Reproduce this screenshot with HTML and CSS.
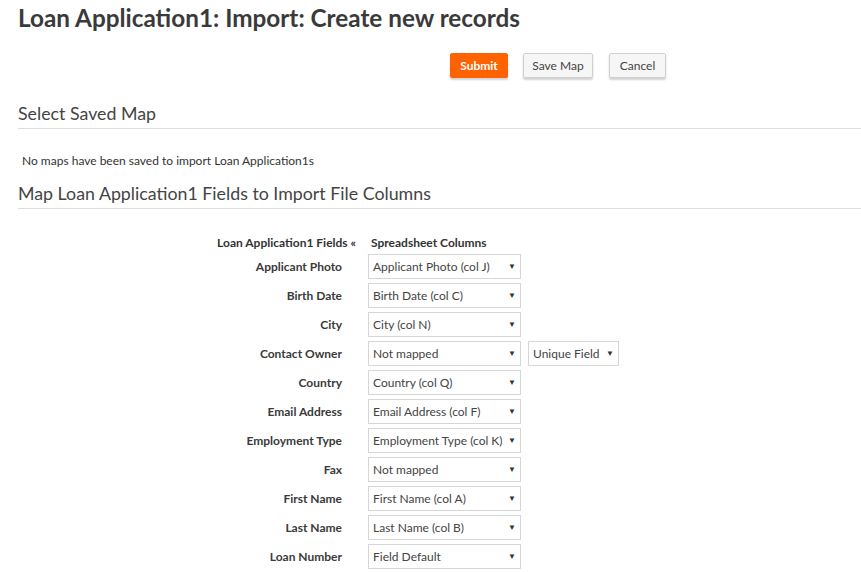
FILE: index.html
```html
<!DOCTYPE html>
<html>
<head>
<meta charset="utf-8">
<link rel="stylesheet" href="styles.css">
</head>
<body>
<h1 class="title">Loan Application1: Import: Create new records</h1>
<div class="actions">
  <button class="btn btn-primary btn-submit">Submit</button>
  <button class="btn btn-save">Save Map</button>
  <button class="btn btn-cancel">Cancel</button>
</div>
<h2 class="section">Select Saved Map</h2>
<p class="note">No maps have been saved to import Loan Application1s</p>
<h2 class="section section-map">Map Loan Application1 Fields to Import File Columns</h2>
<div class="map">
  <div class="map-head-label">Loan Application1 Fields «</div>
  <div class="map-head-col">Spreadsheet Columns</div>

  <div class="lbl">Applicant Photo</div>
  <div class="ctrls"><div class="sel">Applicant Photo (col J)<span class="arr">▼</span></div></div>

  <div class="lbl">Birth Date</div>
  <div class="ctrls"><div class="sel">Birth Date (col C)<span class="arr">▼</span></div></div>

  <div class="lbl">City</div>
  <div class="ctrls"><div class="sel">City (col N)<span class="arr">▼</span></div></div>

  <div class="lbl">Contact Owner</div>
  <div class="ctrls"><div class="sel">Not mapped<span class="arr">▼</span></div><div class="sel sel-small">Unique Field<span class="arr">▼</span></div></div>

  <div class="lbl">Country</div>
  <div class="ctrls"><div class="sel">Country (col Q)<span class="arr">▼</span></div></div>

  <div class="lbl">Email Address</div>
  <div class="ctrls"><div class="sel">Email Address (col F)<span class="arr">▼</span></div></div>

  <div class="lbl">Employment Type</div>
  <div class="ctrls"><div class="sel">Employment Type (col K)<span class="arr">▼</span></div></div>

  <div class="lbl">Fax</div>
  <div class="ctrls"><div class="sel">Not mapped<span class="arr">▼</span></div></div>

  <div class="lbl">First Name</div>
  <div class="ctrls"><div class="sel">First Name (col A)<span class="arr">▼</span></div></div>

  <div class="lbl">Last Name</div>
  <div class="ctrls"><div class="sel">Last Name (col B)<span class="arr">▼</span></div></div>

  <div class="lbl">Loan Number</div>
  <div class="ctrls"><div class="sel">Field Default<span class="arr">▼</span></div></div>
</div>
</body>
</html>
```

FILE: styles.css
```css
html, body {
  margin: 0;
  padding: 0;
  background: #fff;
}
body {
  font-family: Lato, "Open Sans", sans-serif;
  color: #333;
  padding-left: 18px;
  overflow: hidden;
  height: 572px;
}
.title {
  margin: 0;
  padding-top: 4px;
  font-size: 24.3px;
  line-height: 28px;
  font-weight: 700;
  color: #3a3a3a;
}
.actions {
  display: flex;
  margin-top: 21px;
  padding-left: 432px;
}
.btn {
  font-family: Lato, sans-serif;
  font-size: 12px;
  height: 25px;
  padding: 0;
  border: 1px solid #d0d0d0;
  border-radius: 2px;
  background: #f6f6f6;
  color: #444;
  box-shadow: 0 2px 2px rgba(0,0,0,0.18);
}
.btn-submit { width: 58px; }
.btn-save { width: 70px; margin-left: 15px; }
.btn-cancel { width: 57px; margin-left: 16px; }
.btn-primary {
  background: #ff6200;
  border-color: #ff6200;
  color: #fff;
  font-weight: 700;
}
.section {
  margin: 0;
  font-size: 17.8px;
  font-weight: 400;
  line-height: 22px;
  color: #444;
  border-bottom: 1px solid #ddd;
}
.actions + .section {
  margin-top: 24px;
  padding-bottom: 4px;
}
.note {
  margin: 25px 0 0 4px;
  font-size: 12px;
  line-height: 14px;
  color: #333;
}
.section-map {
  margin-top: 14px;
  padding-bottom: 4px;
}
.map {
  display: grid;
  grid-template-columns: 338px auto;
  grid-template-rows: 16px;
  grid-auto-rows: 25px;
  row-gap: 4px;
  margin-top: 25px;
  align-items: center;
}
.map-head-label, .map-head-col {
  font-size: 12px;
  font-weight: 700;
  color: #333;
}
.map-head-label {
  text-align: right;
}
.map-head-col {
  padding-left: 15px;
}
.lbl {
  font-size: 12px;
  font-weight: 700;
  text-align: right;
  padding-right: 14px;
  color: #3a3a3a;
}
.ctrls {
  display: flex;
  gap: 7px;
  padding-left: 12px;
}
.sel {
  position: relative;
  box-sizing: border-box;
  width: 153px;
  height: 25px;
  border: 1px solid #d6d6d6;
  padding-left: 4px;
  font-size: 12px;
  line-height: 23px;
  color: #444;
  background: #fff;
  white-space: nowrap;
}
.sel-small {
  width: 91px;
}
.arr {
  position: absolute;
  right: 4px;
  top: 0;
  font-size: 8px;
  color: #333;
}
```
